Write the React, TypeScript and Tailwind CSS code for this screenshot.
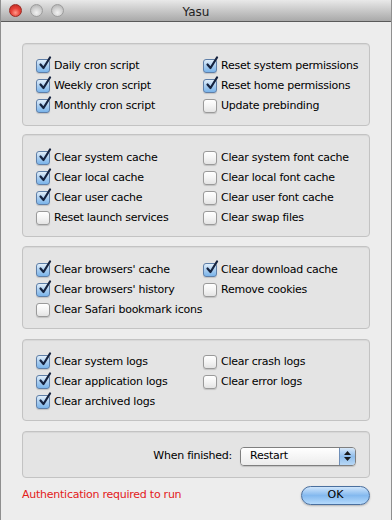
import type { ReactNode } from "react";

type Item = { label: string; checked: boolean };

function Checkbox({ checked }: { checked: boolean }) {
  return (
    <span
      className={
        "relative flex h-[14px] w-[14px] shrink-0 items-center justify-center rounded-[3px] border shadow-[0_1px_1px_rgba(0,0,0,0.15)] " +
        (checked
          ? "border-[#5f7fa8] bg-gradient-to-b from-[#e2effa] via-[#a9cdef] to-[#7ab4ea]"
          : "border-[#9a9a9a] bg-gradient-to-b from-[#ffffff] via-[#f4f4f4] to-[#e4e4e4]")
      }
    >
      {checked && (
        <svg
          className="absolute -top-[4px] left-[1px] h-[15px] w-[14px]"
          viewBox="0 0 14 15"
          fill="none"
        >
          <path
            d="M2.5 8.5 L5.5 12 L12 1.5"
            stroke="#16233f"
            strokeWidth="2.2"
            strokeLinecap="round"
            strokeLinejoin="round"
          />
        </svg>
      )}
    </span>
  );
}

function Row({ item }: { item: Item }) {
  return (
    <div className="flex h-[20px] items-center gap-[4px]">
      <Checkbox checked={item.checked} />
      <span className="whitespace-nowrap">{item.label}</span>
    </div>
  );
}

function Panel({ children, className = "" }: { children: ReactNode; className?: string }) {
  return (
    <div
      className={
        "rounded-[4px] border border-[#c3c3c3] bg-[#e4e4e4] shadow-[inset_0_1px_1px_rgba(0,0,0,0.06)] " +
        className
      }
    >
      {children}
    </div>
  );
}

function Group({ left, right, className = "" }: { left: Item[]; right: Item[]; className?: string }) {
  return (
    <Panel className={"flex pl-[13px] " + className}>
      <div className="flex w-[167px] flex-col">
        {left.map((it) => (
          <Row key={it.label} item={it} />
        ))}
      </div>
      <div className="flex flex-col">
        {right.map((it) => (
          <Row key={it.label} item={it} />
        ))}
      </div>
    </Panel>
  );
}

const scripts = {
  left: [
    { label: "Daily cron script", checked: true },
    { label: "Weekly cron script", checked: true },
    { label: "Monthly cron script", checked: true },
  ],
  right: [
    { label: "Reset system permissions", checked: true },
    { label: "Reset home permissions", checked: true },
    { label: "Update prebinding", checked: false },
  ],
};

const caches = {
  left: [
    { label: "Clear system cache", checked: true },
    { label: "Clear local cache", checked: true },
    { label: "Clear user cache", checked: true },
    { label: "Reset launch services", checked: false },
  ],
  right: [
    { label: "Clear system font cache", checked: false },
    { label: "Clear local font cache", checked: false },
    { label: "Clear user font cache", checked: false },
    { label: "Clear swap files", checked: false },
  ],
};

const browsers = {
  left: [
    { label: "Clear browsers' cache", checked: true },
    { label: "Clear browsers' history", checked: true },
    { label: "Clear Safari bookmark icons", checked: false },
  ],
  right: [
    { label: "Clear download cache", checked: true },
    { label: "Remove cookies", checked: false },
  ],
};

const logs = {
  left: [
    { label: "Clear system logs", checked: true },
    { label: "Clear application logs", checked: true },
    { label: "Clear archived logs", checked: true },
  ],
  right: [
    { label: "Clear crash logs", checked: false },
    { label: "Clear error logs", checked: false },
  ],
};

function Light({ red }: { red?: boolean }) {
  return (
    <span
      className={
        "h-[13px] w-[13px] rounded-full border " +
        (red
          ? "border-[#9b2a22] bg-[radial-gradient(circle_at_50%_70%,#ff9a8a_0%,#e8433a_45%,#b8261d_100%)]"
          : "border-[#9c9c9c] bg-[radial-gradient(circle_at_50%_70%,#f2f2f2_0%,#d0d0d0_50%,#a9a9a9_100%)]")
      }
    />
  );
}

export default function App() {
  return (
    <div
      className="flex h-[520px] w-[392px] flex-col border-x border-[#8f8f8f] bg-[#ededed] text-[11px] tracking-[-0.25px] text-black"
      style={{ fontFamily: '"DejaVu Sans", "Liberation Sans", sans-serif' }}
    >
      {/* title bar */}
      <div className="relative flex h-[22px] shrink-0 items-center border-b border-[#5a5a5a] bg-gradient-to-b from-[#e9e9e9] to-[#a9a9a9] pl-[8px]">
        <div className="flex gap-[8px]">
          <Light red />
          <Light />
          <Light />
        </div>
        <div className="absolute inset-x-0 top-[3px] text-center text-[12px] tracking-normal text-[#222]">Yasu</div>
      </div>

      <div className="flex flex-col px-[21px] pt-[21px]">
        <Group left={scripts.left} right={scripts.right} className="pb-[9px] pt-[12px]" />
        <Group left={caches.left} right={caches.right} className="mt-[8px] pb-[8px] pt-[13px]" />
        <Group left={browsers.left} right={browsers.right} className="mt-[9px] pb-[8px] pt-[13px]" />
        <Group left={logs.left} right={logs.right} className="mt-[10px] pb-[8px] pt-[12px]" />
        <Panel className="mt-[10px] flex h-[47px] items-center justify-end gap-[8px] pr-[13px] pt-[3px]">
          <span>When finished:</span>
          <div className="flex h-[19px] w-[116px] overflow-hidden rounded-[4px] border border-[#7f7f7f] shadow-[0_1px_1px_rgba(0,0,0,0.15)]">
            <div className="flex flex-1 items-center bg-gradient-to-b from-[#ffffff] to-[#ececec] pl-[9px]">Restart</div>
            <div className="flex w-[16px] flex-col items-center justify-center gap-[2px] border-l border-[#6f8fb8] bg-gradient-to-b from-[#d8e8f8] via-[#8fbdeb] to-[#b8d8f6]">
              <svg width="7" height="4" viewBox="0 0 7 4">
                <path d="M0 4 L3.5 0 L7 4 Z" fill="#1a1a1a" />
              </svg>
              <svg width="7" height="4" viewBox="0 0 7 4">
                <path d="M0 0 L3.5 4 L7 0 Z" fill="#1a1a1a" />
              </svg>
            </div>
          </div>
        </Panel>
        <div className="mt-[8px] flex items-center justify-between">
          <span className="text-[#e3201b]">Authentication required to run</span>
          <button className="flex h-[19px] w-[69px] items-center justify-center rounded-full border border-[#4a6f9e] bg-gradient-to-b from-[#cfe5fb] via-[#84b9ef] to-[#b5dafc] text-[11px] tracking-normal shadow-[0_1px_2px_rgba(0,0,0,0.25)]">
            OK
          </button>
        </div>
      </div>
    </div>
  );
}
